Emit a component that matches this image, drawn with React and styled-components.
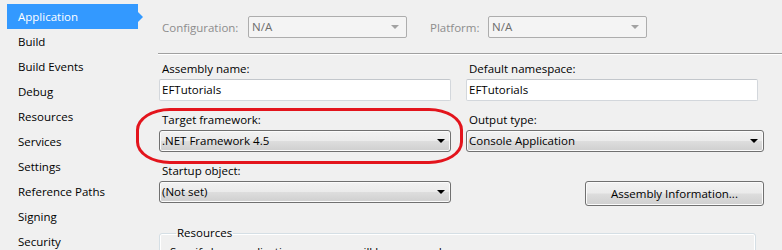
import React from 'react';
import styled, { createGlobalStyle } from 'styled-components';

const GlobalStyle = createGlobalStyle`
  html, body {
    margin: 0;
    padding: 0;
    background: #f0f0f0;
    overflow: hidden;
  }
  body {
    font-family: "Open Sans", "Noto Sans", sans-serif;
    font-size: 11.5px;
    color: #000;
  }
`;

const pages = [
  'Application',
  'Build',
  'Build Events',
  'Debug',
  'Resources',
  'Services',
  'Settings',
  'Reference Paths',
  'Signing',
  'Security',
];

const App = () => {
  return (
    <Page>
      <GlobalStyle />
      <Sidebar>
        {pages.map((name, i) => (
          <NavItem key={name} active={i === 0}>
            {name}
          </NavItem>
        ))}
      </Sidebar>

      <Main>
        <ConfigRow>
          <DimLabel>Configuration:</DimLabel>
          <DisabledCombo>
            N/A
            <Arrow dim />
          </DisabledCombo>
          <DimLabel>Platform:</DimLabel>
          <DisabledCombo>
            N/A
            <Arrow dim />
          </DisabledCombo>
        </ConfigRow>

        <Separator />

        <Fields>
          <Field>
            <Label>Assembly name:</Label>
            <TextBox>EFTutorials</TextBox>
          </Field>
          <Field>
            <Label>Default namespace:</Label>
            <TextBox>EFTutorials</TextBox>
          </Field>

          <Field>
            <Label>Target framework:</Label>
            <Combo>
              .NET Framework 4.5
              <Arrow />
            </Combo>
          </Field>
          <Field wide>
            <Label>Output type:</Label>
            <Combo>
              Console Application
              <Arrow />
            </Combo>
          </Field>

          <Field>
            <Label>Startup object:</Label>
            <Combo>
              (Not set)
              <Arrow />
            </Combo>
          </Field>
          <ButtonCell>
            <Button>Assembly Information...</Button>
          </ButtonCell>
        </Fields>

        <GroupBox>
          <legend>Resources</legend>
          <GroupText>Specify how application resources will be managed:</GroupText>
        </GroupBox>
      </Main>

      <Highlight />
    </Page>
  );
};

const Page = styled.div`
  position: relative;
  display: flex;
  width: 782px;
  height: 250px;
  overflow: hidden;
`;

const Sidebar = styled.nav`
  width: 151px;
  flex: none;
  padding: 4px 0 0 7px;
  box-sizing: border-box;
  display: flex;
  flex-direction: column;
`;

const NavItem = styled.div`
  position: relative;
  width: 131px;
  height: 25px;
  line-height: 25px;
  padding-left: 11px;
  box-sizing: border-box;
  white-space: nowrap;
  background: ${(p) => (p.active ? '#3399ff' : 'transparent')};
  color: ${(p) => (p.active ? '#fff' : '#000')};

  ${(p) =>
    p.active &&
    `
    &::after {
      content: '';
      position: absolute;
      right: -5px;
      top: 8px;
      border-left: 5px solid #3399ff;
      border-top: 5px solid transparent;
      border-bottom: 5px solid transparent;
    }
  `}
`;

const Main = styled.main`
  flex: 1;
  padding: 16px 0 0 7px;
  display: flex;
  flex-direction: column;
`;

const ConfigRow = styled.div`
  display: flex;
  align-items: center;
  height: 22px;
  padding-left: 4px;
`;

const DimLabel = styled.span`
  color: #8d8d8d;
  width: 86px;
  white-space: nowrap;

  & + div + & {
    margin-left: 23px;
    width: 58px;
  }
`;

const DisabledCombo = styled.div`
  position: relative;
  width: 159px;
  height: 22px;
  line-height: 20px;
  box-sizing: border-box;
  border: 1px solid #adadad;
  border-radius: 2px;
  background: #f4f4f4;
  color: #6d6d6d;
  padding-left: 3px;
`;

const Arrow = styled.span`
  position: absolute;
  right: ${(p) => (p.dim ? '7px' : '5px')};
  top: 50%;
  margin-top: -2px;
  border-top: 4px solid ${(p) => (p.dim ? '#a2a2a2' : '#000')};
  border-left: 4px solid transparent;
  border-right: 4px solid transparent;
`;

const Separator = styled.hr`
  margin: 15px 0 0 0;
  border: none;
  border-top: 1px solid #a0a0a0;
  border-bottom: 1px solid #ffffff;
  height: 0;
`;

const Fields = styled.div`
  display: grid;
  grid-template-columns: 292px 298px;
  column-gap: 15px;
  row-gap: 10px;
  margin: 5px 0 0 1px;
`;

const Field = styled.div`
  display: flex;
  flex-direction: column;
  gap: 1px;
  width: ${(p) => (p.wide ? '298px' : '292px')};
`;

const Label = styled.label`
  height: 18px;
  line-height: 18px;
  padding-left: 3px;
  white-space: nowrap;
`;

const TextBox = styled.div`
  height: 22px;
  line-height: 20px;
  box-sizing: border-box;
  border: 1px solid #d3d7dc;
  border-top-color: #c3c7cc;
  border-radius: 2px;
  background: #fff;
  padding-left: 2px;
`;

const Combo = styled.div`
  position: relative;
  height: 22px;
  line-height: 20px;
  box-sizing: border-box;
  border: 1px solid #707070;
  border-radius: 3px;
  background: linear-gradient(#f2f2f2 0%, #ebebeb 48%, #dddddd 52%, #cfcfcf 100%);
  box-shadow: inset 0 0 0 1px #fbfbfb;
  padding-left: 2px;
`;

const ButtonCell = styled.div`
  display: flex;
  justify-content: flex-end;
  align-items: flex-end;
  margin-bottom: -3px;
`;

const Button = styled.button`
  width: 179px;
  height: 25px;
  font: inherit;
  color: #000;
  border: 1px solid #707070;
  border-radius: 3px;
  background: linear-gradient(#f2f2f2 0%, #ebebeb 48%, #dddddd 52%, #cfcfcf 100%);
  box-shadow: inset 0 0 0 1px #fbfbfb;
  padding: 0;
`;

const GroupBox = styled.fieldset`
  margin: 22px 0 0 1px;
  width: 597px;
  box-sizing: border-box;
  border: 1px solid #d5dfe5;
  border-radius: 3px;
  box-shadow: inset 0 0 0 1px #fff;
  padding: 3px 0 0 10px;

  legend {
    padding: 0 1px;
    margin-left: 6px;
    line-height: 16px;
  }
`;

const GroupText = styled.div`
  line-height: 16px;
  white-space: nowrap;
`;

const Highlight = styled.div`
  position: absolute;
  left: 136px;
  top: 108px;
  width: 327px;
  height: 56px;
  box-sizing: border-box;
  border: 3px solid #e3141c;
  border-radius: 34px / 22px;
  pointer-events: none;
`;

export default App;
